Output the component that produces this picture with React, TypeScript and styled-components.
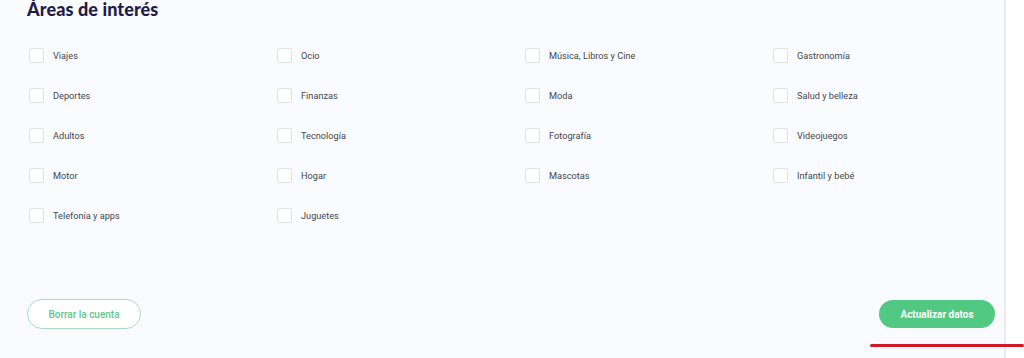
import React from "react";
import styled, { createGlobalStyle } from "styled-components";

const GlobalStyle = createGlobalStyle`
  html, body {
    margin: 0;
    padding: 0;
    background: #ffffff;
    font-family: Roboto, "Liberation Sans", sans-serif;
  }
`;

const interests: string[] = [
  "Viajes",
  "Ocio",
  "Música, Libros y Cine",
  "Gastronomía",
  "Deportes",
  "Finanzas",
  "Moda",
  "Salud y belleza",
  "Adultos",
  "Tecnología",
  "Fotografía",
  "Videojuegos",
  "Motor",
  "Hogar",
  "Mascotas",
  "Infantil y bebé",
  "Telefonía y apps",
  "Juguetes",
];

export default function App() {
  const [checked, setChecked] = React.useState<Record<string, boolean>>({});

  return (
    <Page>
      <GlobalStyle />
      <Panel>
        <Title>Áreas de interés</Title>
        <Grid>
          {interests.map((name) => (
            <Option key={name}>
              <Box
                type="checkbox"
                checked={!!checked[name]}
                onChange={() =>
                  setChecked((c) => ({ ...c, [name]: !c[name] }))
                }
              />
              <Label>{name}</Label>
            </Option>
          ))}
        </Grid>
        <Footer>
          <OutlineButton>Borrar la cuenta</OutlineButton>
          <SolidButton>Actualizar datos</SolidButton>
        </Footer>
        <RedMark />
      </Panel>
      <Gutter />
    </Page>
  );
}

const Page = styled.div`
  display: flex;
  width: 1024px;
  height: 358px;
  overflow: hidden;
`;

const Panel = styled.section`
  position: relative;
  width: 1006px;
  flex-shrink: 0;
  background: #fafbfe;
  border-right: 2px solid #ebecf1;
  padding: 0 0 0 27px;
  box-sizing: border-box;
`;

const Gutter = styled.div`
  flex: 1;
  background: #ffffff;
`;

const Title = styled.h2`
  margin: 0;
  font-family: Lato, "Noto Sans", sans-serif;
  font-weight: 900;
  font-size: 18px;
  line-height: 19px;
  color: #1f1c4a;
  letter-spacing: 0.1px;
`;

const Grid = styled.div`
  display: grid;
  grid-template-columns: repeat(4, 248px);
  grid-auto-rows: 40px;
  margin-top: 16px;
  padding-left: 2px;
`;

const Option = styled.label`
  display: flex;
  align-items: center;
  gap: 9px;
  height: 40px;
  cursor: pointer;
`;

const Box = styled.input`
  appearance: none;
  margin: 0;
  width: 15px;
  height: 15px;
  border: 1px solid #dfe1e6;
  border-radius: 2px;
  background: #ffffff;
  box-sizing: border-box;
  cursor: pointer;

  &:checked {
    background: #4fc97f;
    border-color: #4fc97f;
  }
`;

const Label = styled.span`
  font-family: Roboto, "Liberation Sans", sans-serif;
  font-size: 9.2px;
  color: #45464c;
`;

const Footer = styled.div`
  display: flex;
  justify-content: space-between;
  align-items: center;
  margin-top: 64px;
  padding-right: 9px;
`;

const OutlineButton = styled.button`
  width: 114px;
  height: 30px;
  border-radius: 15px;
  border: 1px solid #a9dcc0;
  background: #ffffff;
  color: #63c68a;
  font-family: Roboto, "Liberation Sans", sans-serif;
  font-weight: 500;
  font-size: 10px;
  cursor: pointer;
`;

const SolidButton = styled.button`
  width: 116px;
  height: 28px;
  border-radius: 14px;
  border: none;
  background: #51c982;
  color: #ffffff;
  font-family: Roboto, "Liberation Sans", sans-serif;
  font-weight: 700;
  font-size: 10px;
  cursor: pointer;
`;

const RedMark = styled.div`
  position: absolute;
  left: 870px;
  top: 344px;
  width: 154px;
  height: 3px;
  border-radius: 2px;
  background: #d11a27;
`;
